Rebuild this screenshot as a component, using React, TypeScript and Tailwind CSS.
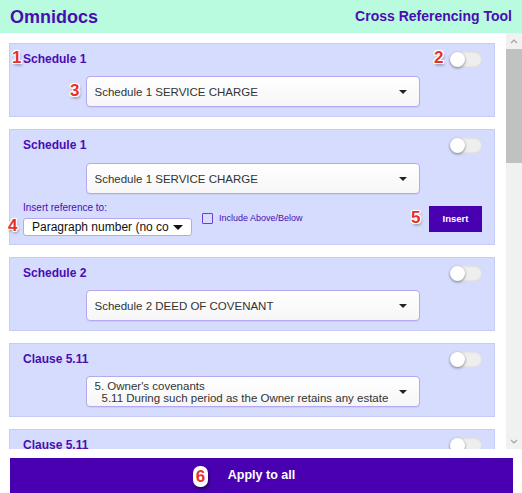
import React from "react";

const PURPLE = "text-[#4a0db3]";

function Toggle() {
  return (
    <div className="w-[32px] h-[15px] rounded-full bg-[#eeeeee] shadow-[inset_0_0_2px_rgba(0,0,0,0.15)] relative">
      <div className="absolute left-0 top-0 w-[15px] h-[15px] rounded-full bg-white shadow-[0_1px_3px_rgba(0,0,0,0.45)]" />
    </div>
  );
}

function Arrow() {
  return (
    <div className="w-0 h-0 border-l-[4px] border-r-[4px] border-t-[4px] border-l-transparent border-r-transparent border-t-[#222]" />
  );
}

function BigSelect({ children, multi = false }: { children: React.ReactNode; multi?: boolean }) {
  return (
    <div className="mx-auto w-[334px] h-[31px] rounded-[4px] border border-[#b5a8ee] bg-gradient-to-b from-white to-[#f6f6f6] shadow-[0_1px_1px_rgba(0,0,0,0.06)] flex items-center pl-[8px] pr-[12px]">
      <div
        className={
          "flex-1 overflow-hidden text-[11.5px] text-[#333] " +
          (multi ? "h-[29px] pt-[3px] leading-[12px]" : "leading-[14px]")
        }
      >
        {children}
      </div>
      <Arrow />
    </div>
  );
}

function Card({
  title,
  children,
  h = "h-[74px]",
}: {
  title: string;
  children?: React.ReactNode;
  h?: string;
}) {
  return (
    <div className={"shrink-0 border border-[#c6ccf8] bg-[#d5dcfd] pl-[13px] pr-[12px] pt-[7px] " + h}>
      <div className="flex items-center justify-between h-[16px]">
        <div className={"text-[12px] font-bold leading-[16px] " + PURPLE}>{title}</div>
        <Toggle />
      </div>
      {children}
    </div>
  );
}

function Badge({ n, cls }: { n: string; cls: string }) {
  return (
    <div
      className={
        "absolute text-[17px] leading-[17px] font-bold text-[#e8302b] [text-shadow:1px_0_0_#fff,-1px_0_0_#fff,0_1px_0_#fff,0_-1px_0_#fff,1px_1px_0_#fff,-1px_-1px_0_#fff,1px_-1px_0_#fff,-1px_1px_0_#fff,0_0_3px_#fff,1px_2px_3px_rgba(0,0,0,0.5)] " +
        cls
      }
    >
      {n}
    </div>
  );
}

export default function App() {
  return (
    <div className="w-[522px] h-[493px] relative overflow-hidden bg-white font-['Liberation_Sans',Arial,sans-serif]">
      <div className="h-[33px] bg-[#b9fbdf] flex items-center justify-between pl-[10px] pr-[10px]">
        <div className={"text-[18px] font-bold leading-[22px] " + PURPLE}>Omnidocs</div>
        <div className={"text-[14px] font-bold " + PURPLE}>Cross Referencing Tool</div>
      </div>

      <div className="flex h-[416px]">
        <div className="flex-1 overflow-hidden pl-[9px] pr-[11px] pt-[10px] flex flex-col gap-[12px]">
          <Card title="Schedule 1">
            <div className="mt-[9px]">
              <BigSelect>Schedule 1 SERVICE CHARGE</BigSelect>
            </div>
          </Card>

          <Card title="Schedule 1" h="h-[116px]">
            <div className="mt-[10px]">
              <BigSelect>Schedule 1 SERVICE CHARGE</BigSelect>
            </div>
            <div className="flex items-start mt-[8px]">
              <div className="w-[169px]">
                <div className={"text-[10px] leading-[12px] " + PURPLE}>Insert reference to:</div>
                <div className="mt-[4px] h-[18px] rounded-[3px] border border-[#b5a8ee] bg-white flex items-center pl-[8px] pr-[8px]">
                  <div className="flex-1 overflow-hidden whitespace-nowrap text-[12px] leading-[14px] text-[#111]">
                    Paragraph number (no context)
                  </div>
                  <div className="ml-[4px] w-0 h-0 border-l-[5px] border-r-[5px] border-t-[5px] border-l-transparent border-r-transparent border-t-[#111]" />
                </div>
              </div>
              <div className="ml-[10px] mt-[11px] flex items-center">
                <div className="w-[11px] h-[11px] border-[1.5px] border-[#6c3fd0] rounded-[1px]" />
                <div className={"ml-[6px] text-[9px] leading-[10px] -mt-[2px] " + PURPLE}>Include Above/Below</div>
              </div>
              <div className="ml-auto mt-[4px] w-[53px] h-[26px] bg-[#4800b0] flex items-center justify-center text-white text-[9.5px] font-bold">
                Insert
              </div>
            </div>
          </Card>

          <Card title="Schedule 2">
            <div className="mt-[9px]">
              <BigSelect>Schedule 2 DEED OF COVENANT</BigSelect>
            </div>
          </Card>

          <Card title="Clause 5.11">
            <div className="mt-[9px]">
              <BigSelect multi>
                <div className="whitespace-nowrap">5. Owner's covenants</div>
                <div className="whitespace-nowrap pl-[7px]">5.11 During such period as the Owner retains any estate</div>
              </BigSelect>
            </div>
          </Card>

          <Card title="Clause 5.11" />
        </div>

        <div className="w-[16px] bg-[#f1f1f1] flex flex-col">
          <div className="h-[16px] flex items-center justify-center">
            <svg width="8" height="5" viewBox="0 0 8 5">
              <path d="M1 4 L4 1 L7 4" stroke="#a3a3a3" strokeWidth="1.2" fill="none" />
            </svg>
          </div>
          <div className="h-[114px] bg-[#c1c1c1]" />
          <div className="flex-1" />
          <div className="h-[16px] flex items-center justify-center">
            <svg width="8" height="5" viewBox="0 0 8 5">
              <path d="M1 1 L4 4 L7 1" stroke="#a3a3a3" strokeWidth="1.2" fill="none" />
            </svg>
          </div>
        </div>
      </div>

      <div className="pt-[9px] pl-[10px] pr-[9px]">
        <div className="h-[35px] bg-[#4800b0] flex items-center justify-center text-white text-[12.5px] font-bold">
          Apply to all
        </div>
      </div>

      <Badge n="1" cls="left-[12px] top-[49px]" />
      <Badge n="2" cls="left-[434px] top-[49px]" />
      <Badge n="3" cls="left-[70px] top-[82px]" />
      <Badge n="4" cls="left-[8px] top-[217px]" />
      <Badge n="5" cls="left-[411px] top-[209px]" />
      <div className="absolute left-[193px] top-[466px] w-[15px] h-[21px] rounded-[7px] bg-white shadow-[1px_2px_3px_rgba(0,0,0,0.5)] flex items-center justify-center text-[17px] leading-[17px] font-bold text-[#e8302b]">
        6
      </div>
    </div>
  );
}
